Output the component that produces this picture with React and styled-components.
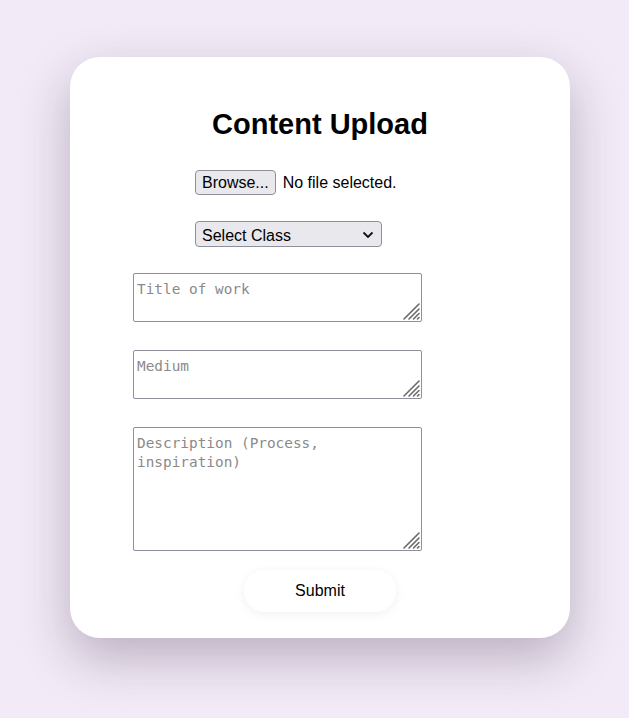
import React from "react";
import styled, { createGlobalStyle } from "styled-components";

const GlobalStyle = createGlobalStyle`
  html, body {
    margin: 0;
    padding: 0;
    background: #f2eaf6;
    font-family: "Liberation Sans", Arial, sans-serif;
  }
`;

// Layout
const Page = styled.div`
  min-height: 718px;
  padding: 57px 0 0 70px;
  box-sizing: border-box;
`;

const Card = styled.div`
  width: 500px;
  height: 581px;
  box-sizing: border-box;
  background: #ffffff;
  border-radius: 30px;
  box-shadow: 0 20px 50px rgba(60, 40, 70, 0.3);
  padding-top: 51px;
  display: flex;
  flex-direction: column;
  align-items: center;
`;

const Title = styled.h1`
  margin: 0 0 29px;
  font-size: 29px;
  line-height: 33px;
  font-weight: bold;
  color: #000;
`;

const Row = styled.div`
  align-self: flex-start;
  margin-left: ${(p) => p.indent}px;
  margin-bottom: ${(p) => p.gap}px;
  display: flex;
  align-items: center;
  position: relative;
`;

// Fake file input (Firefox look)
const BrowseButton = styled.button`
  height: 25px;
  box-sizing: border-box;
  padding: 0 6px;
  font-family: "Liberation Sans", Arial, sans-serif;
  font-size: 16px;
  color: #000;
  background: #e9e9ed;
  border: 1px solid #8f8f9d;
  border-radius: 4px;
`;

const FileLabel = styled.span`
  margin-left: 7px;
  font-size: 16px;
  color: #000;
`;

const Select = styled.select`
  appearance: none;
  width: 187px;
  height: 26px;
  box-sizing: border-box;
  padding: 2px 6px 0;
  font-family: "Liberation Sans", Arial, sans-serif;
  font-size: 16px;
  color: #000;
  background: #e9e9ed;
  border: 1px solid #8f8f9d;
  border-radius: 4px;
`;

const Chevron = styled.svg`
  position: absolute;
  right: 8px;
  top: 10px;
  pointer-events: none;
`;

const TextArea = styled.textarea`
  display: block;
  width: 289px;
  height: ${(p) => p.h}px;
  box-sizing: border-box;
  padding: 6px 3px 2px;
  resize: none;
  font-family: "DejaVu Sans Mono", "Liberation Mono", monospace;
  font-size: 14.4px;
  line-height: 18.5px;
  color: #000;
  background: #fff;
  border: 1px solid #8f8f9d;
  border-radius: 2px;
  outline: none;

  &::placeholder {
    color: #8a8a8a;
  }
`;

const Grip = styled.svg`
  position: absolute;
  right: 1px;
  bottom: 1px;
  pointer-events: none;
`;

const SubmitButton = styled.button`
  width: 152px;
  height: 42px;
  border: none;
  border-radius: 21px;
  background: #ffffff;
  box-shadow: 0 2px 12px rgba(0, 0, 0, 0.06);
  font-family: "Liberation Sans", Arial, sans-serif;
  font-size: 16px;
  color: #000;
  cursor: pointer;
`;

const ResizeGrip = () => (
  <Grip width="19" height="19" viewBox="0 0 19 19">
    <g stroke="#6b6b6b" strokeWidth="1.6" strokeLinecap="round">
      <line x1="2" y1="17" x2="17" y2="2" />
      <line x1="7" y1="17" x2="17" y2="7" />
      <line x1="11.5" y1="17" x2="17" y2="11.5" />
      <line x1="15.5" y1="17" x2="17" y2="15.5" />
    </g>
  </Grip>
);

const Field = ({ placeholder, h, gap }) => (
  <Row indent={63} gap={gap}>
    <TextArea placeholder={placeholder} h={h} />
    <ResizeGrip />
  </Row>
);

const App = () => {
  return (
    <>
      <GlobalStyle />
      <Page>
        <Card>
          <Title>Content Upload</Title>
          <Row indent={125} gap={26}>
            <BrowseButton type="button">Browse...</BrowseButton>
            <FileLabel>No file selected.</FileLabel>
          </Row>
          <Row indent={125} gap={26}>
            <Select defaultValue="">
              <option value="">Select Class</option>
              <option value="painting">Painting</option>
              <option value="drawing">Drawing</option>
            </Select>
            <Chevron width="12" height="8" viewBox="0 0 12 8">
              <polyline
                points="1.5,1.5 6,6 10.5,1.5"
                fill="none"
                stroke="#111"
                strokeWidth="1.8"
              />
            </Chevron>
          </Row>
          <Field placeholder="Title of work" h={49} gap={28} />
          <Field placeholder="Medium" h={49} gap={28} />
          <Field placeholder="Description (Process, inspiration)" h={124} gap={19} />
          <SubmitButton type="button">Submit</SubmitButton>
        </Card>
      </Page>
    </>
  );
};

export default App;
